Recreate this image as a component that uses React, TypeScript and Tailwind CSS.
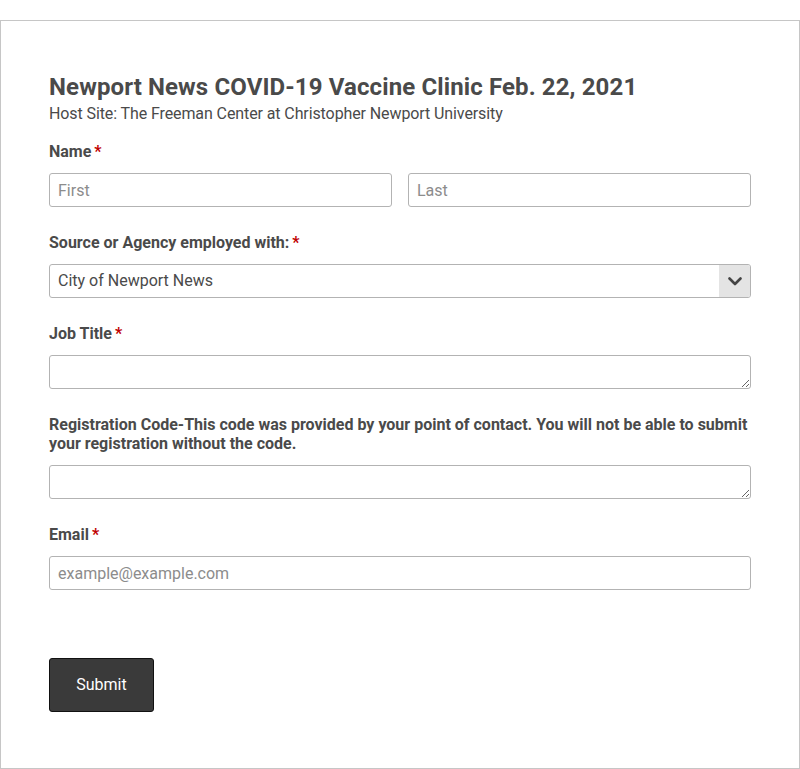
import React from 'react';

const Req = () => <span className="text-[#c00000] ml-[3px]">*</span>;

const Label = ({ children, required }: { children: React.ReactNode; required?: boolean }) => (
  <div className="text-[16px] leading-[20px] font-bold text-[#4a4a4a]">
    {children}
    {required && <Req />}
  </div>
);

const inputCls =
  'w-full h-[34px] border border-[#b3b3b3] rounded-[3px] px-[8px] text-[16px] text-[#4a4a4a] placeholder:text-[#8c8c8c] outline-none bg-white';

export default function App() {
  return (
    <div className="pt-[20px] bg-white" style={{ fontFamily: 'Roboto, "Liberation Sans", sans-serif' }}>
      <div className="h-[749px] border border-[#c6c6c6] pl-[48px] pr-[48px] pt-[52px]">
        <h1 className="text-[24px] leading-[28px] font-bold text-[#4a4a4a] tracking-[0.12px]">
          Newport News COVID-19 Vaccine Clinic Feb. 22, 2021
        </h1>
        <p className="mt-[3px] text-[16px] leading-[20px] text-[#4a4a4a] tracking-[-0.1px]">
          Host Site: The Freeman Center at Christopher Newport University
        </p>

        <div className="mt-[18px]">
          <Label required>Name</Label>
          <div className="mt-[11px] flex gap-[16px]">
            <input className={inputCls} placeholder="First" />
            <input className={inputCls} placeholder="Last" />
          </div>
        </div>

        <div className="mt-[26px]">
          <Label required>Source or Agency employed with:</Label>
          <div className="mt-[11px] relative h-[34px] border border-[#b3b3b3] rounded-[3px] flex items-center overflow-hidden">
            <span className="flex-1 px-[8px] text-[16px] text-[#4a4a4a]">City of Newport News</span>
            <div className="w-[31px] h-full bg-[#e4e4e4] flex items-center justify-center">
              <svg width="14" height="9" viewBox="0 0 14 9" fill="none">
                <path d="M1.5 1.5 L7 7 L12.5 1.5" stroke="#444" strokeWidth="2.6" strokeLinecap="round" strokeLinejoin="round" />
              </svg>
            </div>
          </div>
        </div>

        <div className="mt-[26px]">
          <Label required>Job Title</Label>
          <textarea className={inputCls + ' block mt-[11px] resize-y'} />
        </div>

        <div className="mt-[26px]">
          <div className="text-[16px] leading-[19px] font-bold text-[#4a4a4a]">
            Registration Code-This code was provided by your point of contact. You will not be able to submit your
            registration without the code.
          </div>
          <textarea className={inputCls + ' block mt-[12px] resize-y'} />
        </div>

        <div className="mt-[26px]">
          <Label required>Email</Label>
          <input className={inputCls + ' mt-[11px]'} placeholder="example@example.com" />
        </div>

        <button className="mt-[68px] w-[105px] h-[54px] bg-[#3a3a3a] border border-[#111] rounded-[3px] text-white text-[16px]">
          Submit
        </button>
      </div>
    </div>
  );
}
